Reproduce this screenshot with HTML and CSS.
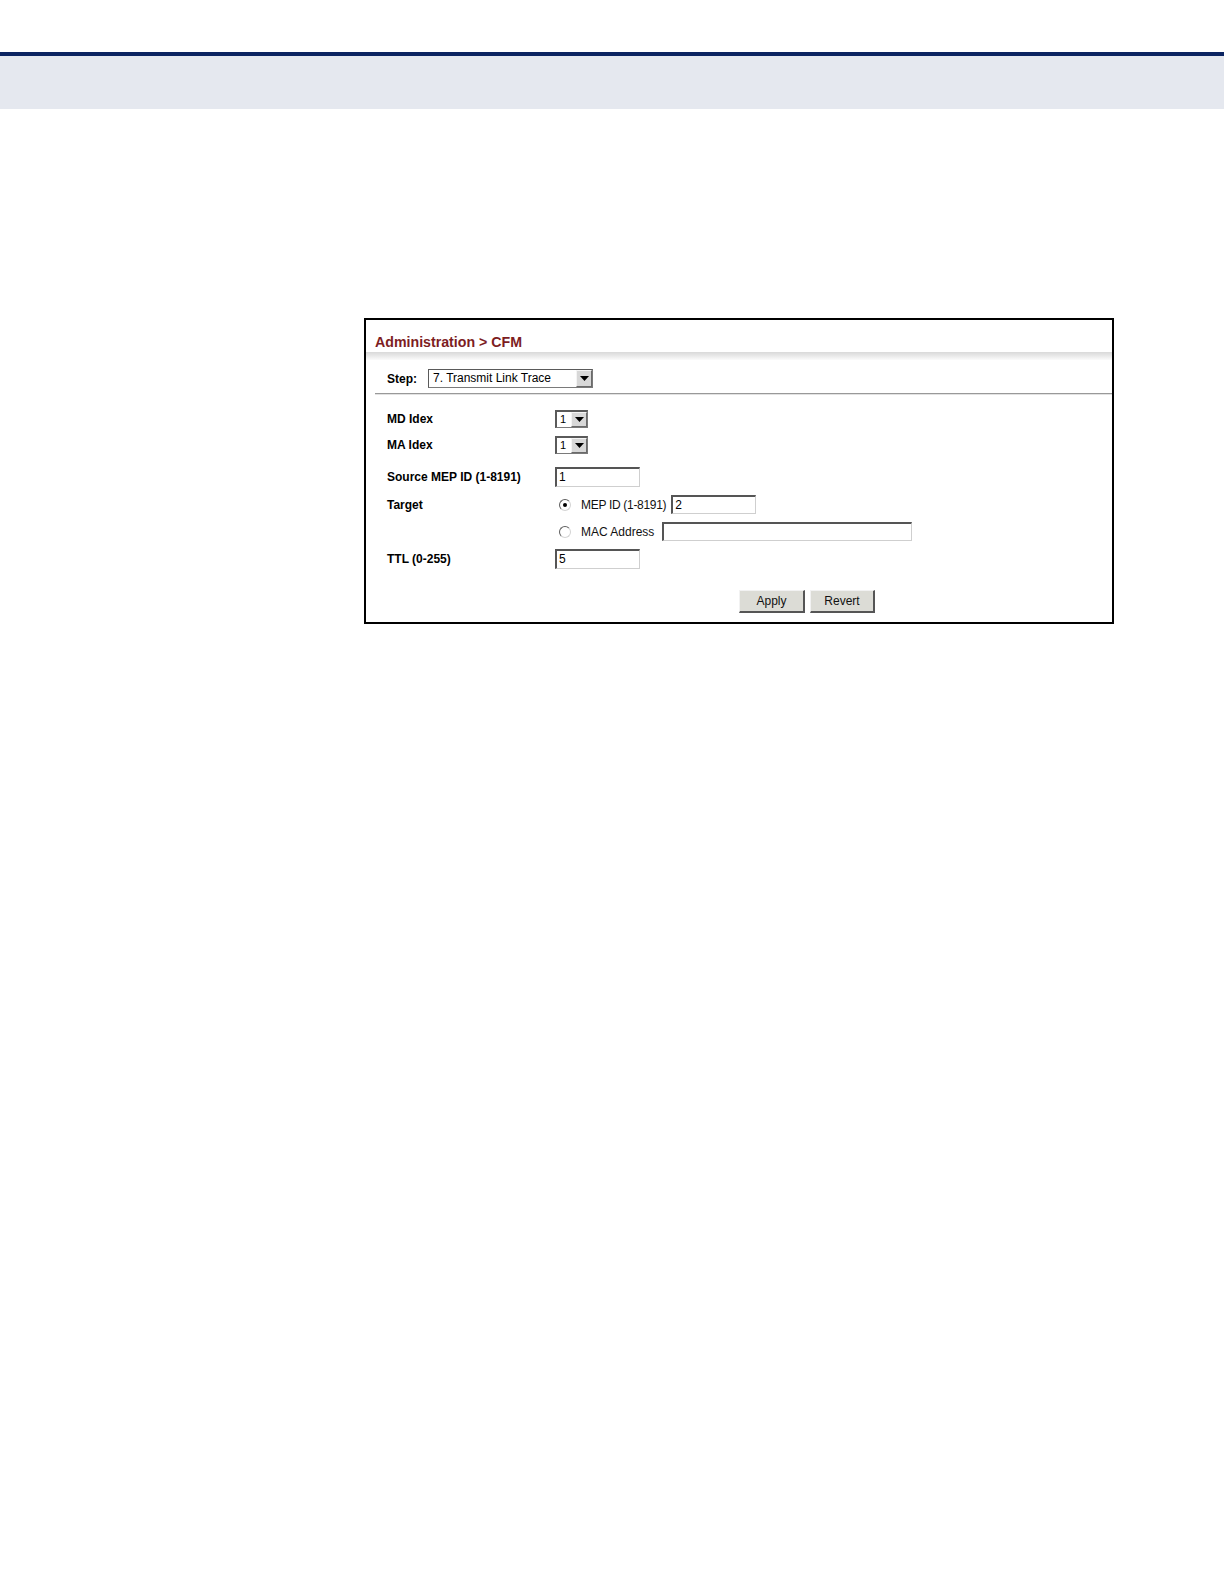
FILE: index.html
```html
<!DOCTYPE html>
<html>
<head>
<meta charset="utf-8">
<title>Administration &gt; CFM</title>
<link rel="stylesheet" href="styles.css">
</head>
<body>
<div class="topbar"></div>
<div class="panel">
  <div class="panel-head"><span class="title">Administration &gt; CFM</span></div>
  <div class="head-shade"></div>
  <div class="step-row">
    <span class="step-label">Step:</span>
    <div class="select step-select">
      <span class="sel-text">7. Transmit Link Trace</span>
      <span class="sel-btn"><svg width="9" height="5" viewBox="0 0 9 5"><polygon points="0,0 9,0 4.5,5" fill="#000"/></svg></span>
    </div>
  </div>
  <div class="rule"></div>
  <div class="form">
    <div class="row r-md">
      <span class="label">MD Idex</span>
      <div class="select small-select">
        <span class="sel-text">1</span>
        <span class="sel-btn"><svg width="9" height="5" viewBox="0 0 9 5"><polygon points="0,0 9,0 4.5,5" fill="#000"/></svg></span>
      </div>
    </div>
    <div class="row r-ma">
      <span class="label">MA Idex</span>
      <div class="select small-select">
        <span class="sel-text">1</span>
        <span class="sel-btn"><svg width="9" height="5" viewBox="0 0 9 5"><polygon points="0,0 9,0 4.5,5" fill="#000"/></svg></span>
      </div>
    </div>
    <div class="row r-src">
      <span class="label">Source MEP ID (1-8191)</span>
      <div class="input w-short">1</div>
    </div>
    <div class="row r-target">
      <span class="label">Target</span>
      <div class="choice">
        <span class="radio checked"></span>
        <span class="choice-text">MEP ID (1-8191)</span>
        <div class="input w-mep">2</div>
      </div>
    </div>
    <div class="row r-mac">
      <span class="label"></span>
      <div class="choice">
        <span class="radio"></span>
        <span class="choice-text">MAC Address</span>
        <div class="input w-mac"></div>
      </div>
    </div>
    <div class="row r-ttl">
      <span class="label">TTL (0-255)</span>
      <div class="input w-short">5</div>
    </div>
  </div>
  <div class="actions">
    <button class="btn btn-apply">Apply</button>
    <button class="btn btn-revert">Revert</button>
  </div>
</div>
</body>
</html>
```
FILE: styles.css
```css
html, body {
  margin: 0;
  padding: 0;
  background: #ffffff;
}
body {
  font-family: "Liberation Sans", Arial, sans-serif;
  color: #000;
  padding-top: 52px;
}
.topbar {
  border-top: 4px solid #0b2461;
  height: 53px;
  background: #e5e8ef;
}
.panel {
  box-sizing: border-box;
  margin-top: 209px;
  margin-left: 364px;
  width: 750px;
  height: 306px;
  border: 2px solid #000;
  background: #fff;
}
.panel-head {
  height: 32px;
  padding-left: 9px;
  box-sizing: border-box;
  padding-top: 14px;
}
.title {
  display: block;
  font-size: 14.2px;
  line-height: 16px;
  font-weight: bold;
  color: #7d1d1f;
}
.head-shade {
  height: 8px;
  background: linear-gradient(to bottom, #d9d9d9 0%, #e9e9e9 50%, #fbfbfb 100%);
}
.step-row {
  display: flex;
  align-items: center;
  padding-left: 21px;
  margin-top: 9px;
  height: 19px;
}
.step-label {
  width: 41px;
  font-size: 12px;
  font-weight: bold;
}
.select {
  box-sizing: border-box;
  display: flex;
  align-items: stretch;
  background: #fff;
  border: 1px solid #7a7a7a;
  border-top-color: #5a5a5a;
  border-left-color: #5a5a5a;
}
.step-select {
  width: 165px;
  height: 19px;
}
.sel-text {
  flex: 1;
  font-size: 12px;
  line-height: 17px;
  padding-left: 4px;
  color: #000;
  white-space: nowrap;
}
.sel-btn {
  box-sizing: border-box;
  width: 16px;
  display: flex;
  align-items: center;
  justify-content: center;
  background: #d8d8d8;
  border: 1px solid #f4f4f4;
  border-right-color: #6a6a6a;
  border-bottom-color: #6a6a6a;
}
.small-select {
  width: 33px;
  height: 18px;
  border-width: 2px 1px 1px 2px;
}
.small-select .sel-text {
  font-size: 11px;
  line-height: 14px;
  padding-left: 3px;
}
.rule {
  margin-top: 5px;
  margin-left: 9px;
  height: 1px;
  background: #999;
  border-bottom: 1px solid #e2e2e2;
}
.form {
  padding-left: 21px;
}
.row {
  display: grid;
  grid-template-columns: 168px 1fr;
  align-items: center;
}
.r-md { margin-top: 15px; height: 18px; }
.r-ma { margin-top: 8px; height: 18px; }
.r-src { margin-top: 13px; height: 20px; }
.r-target { margin-top: 8px; height: 19px; }
.r-mac { margin-top: 8px; height: 19px; }
.r-ttl { margin-top: 8px; height: 20px; }
.label {
  font-size: 12px;
  font-weight: bold;
  white-space: nowrap;
}
.input {
  box-sizing: border-box;
  height: 19px;
  border: 1px solid #cfcfcf;
  border-top: 2px solid #555;
  border-left: 2px solid #555;
  font-size: 12px;
  line-height: 16px;
  padding-left: 2px;
  background: #fff;
}
.r-src .input, .r-ttl .input { height: 20px; }
.w-short { width: 85px; }
.w-mep { width: 85px; }
.w-mac { width: 250px; }
.choice {
  display: flex;
  align-items: center;
}
.radio {
  box-sizing: border-box;
  width: 12px;
  height: 12px;
  margin-left: 4px;
  border-radius: 50%;
  border: 1px solid #5e5e5e;
  border-right-color: #d4d4d4;
  border-bottom-color: #d4d4d4;
  background: #fff;
  position: relative;
}
.radio.checked::after {
  content: "";
  position: absolute;
  left: 3px;
  top: 3px;
  width: 4px;
  height: 4px;
  border-radius: 50%;
  background: #000;
}
.choice-text {
  font-size: 12px;
  margin-left: 10px;
  margin-right: 5px;
  color: #111;
  white-space: nowrap;
}
.r-target .choice-text {
  letter-spacing: -0.3px;
}
.r-mac .choice-text {
  margin-right: 8px;
}
.actions {
  display: flex;
  gap: 5px;
  margin-top: 21px;
  padding-left: 373px;
}
.btn {
  box-sizing: border-box;
  height: 23px;
  font-family: "Liberation Sans", Arial, sans-serif;
  font-size: 12px;
  color: #111;
  background: #dcdcd6;
  border: 1px solid #f2f2f2;
  border-right: 2px solid #555;
  border-bottom: 2px solid #555;
  padding: 0;
}
.btn-apply { width: 66px; }
.btn-revert { width: 65px; }
```
